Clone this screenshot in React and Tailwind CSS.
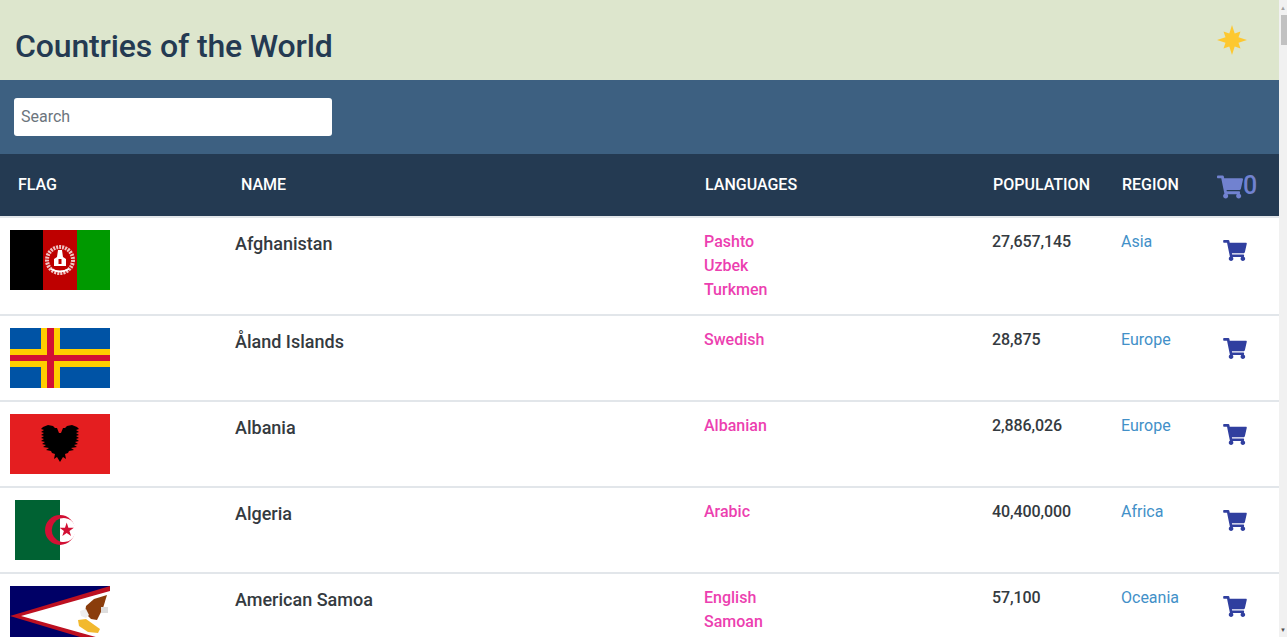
import React from 'react';

const cartPath =
  'M528.12 301.319l47.273-208C578.806 78.301 567.391 64 551.99 64H159.208l-9.166-44.81C147.758 8.021 137.93 0 126.529 0H24C10.745 0 0 10.745 0 24v16c0 13.255 10.745 24 24 24h69.883l70.248 343.435C147.325 417.1 136 435.222 136 456c0 30.928 25.072 56 56 56s56-25.072 56-56c0-15.674-6.447-29.835-16.824-40h209.647C430.447 426.165 424 440.326 424 456c0 30.928 25.072 56 56 56s56-25.072 56-56c0-22.172-12.888-41.332-31.579-50.405l5.517-24.276c3.413-15.018-8.002-29.319-23.403-29.319H218.117l-6.545-32h293.145c11.206 0 20.92-7.754 23.403-18.681z';

function Cart({ className }) {
  return (
    <svg viewBox="0 0 576 512" className={className} fill="currentColor">
      <path d={cartPath} />
    </svg>
  );
}

function Sun() {
  return (
    <svg viewBox="0 0 30 30" className="w-[30px] h-[30px]" fill="#fdc830">
      <path d="M15 0L17.700 8.500 23.500 6.500 21.500 12.300 30 15 21.500 17.700 23.500 23.500 17.700 21.500 15 30 12.300 21.500 6.500 23.500 8.500 17.700 0 15 8.500 12.300 6.500 6.500 12.300 8.500z" />
    </svg>
  );
}

function Afghanistan() {
  return (
    <svg viewBox="0 0 100 60" className="w-[100px] h-[60px]">
      <rect width="34" height="60" fill="#000" />
      <rect x="33" width="34" height="60" fill="#be0000" />
      <rect x="67" width="33" height="60" fill="#009900" />
      <circle cx="50" cy="30" r="13" fill="none" stroke="#f0c4c4" strokeWidth="4" strokeDasharray="2 1" />
      <path d="M44 36v-7l3-2 1-7h4l1 7 3 2v7z" fill="#fff" />
      <rect x="48.500" y="29" width="3" height="5" fill="#be0000" />
      <path d="M41 39q9 5 18 0" fill="none" stroke="#fff" strokeWidth="2" />
    </svg>
  );
}

function Aland() {
  return (
    <svg viewBox="0 0 100 60" className="w-[100px] h-[60px]">
      <rect width="100" height="60" fill="#0053a5" />
      <rect x="31" width="19" height="60" fill="#ffce00" />
      <rect y="21" width="100" height="18" fill="#ffce00" />
      <rect x="37" width="7" height="60" fill="#d21034" />
      <rect y="27" width="100" height="6" fill="#d21034" />
    </svg>
  );
}

function Albania() {
  const half =
    'M50 48L47 43 44 45 45 40 42 39 41 37 36 36 39 34 33 33 36 31 32 30 35 28 31 27 34 25 31 24 34 22 31 21 34 19 31 18 34 16 31 15 33 13 38 11 43 12 46 15 44 16 41 17 43 14 47 14 49 19 50 19z';
  return (
    <svg viewBox="0 0 100 60" className="w-[100px] h-[60px]">
      <rect width="100" height="60" fill="#e41e20" />
      <path d={half} fill="#000" />
      <path d={half} fill="#000" transform="matrix(-1 0 0 1 100 0)" />
    </svg>
  );
}

function Algeria() {
  return (
    <div className="pl-[5px]">
      <svg viewBox="0 0 90 60" className="w-[90px] h-[60px]">
        <rect width="45" height="60" fill="#006233" />
        <circle cx="45" cy="30" r="15" fill="#d21034" />
        <path d="M45 18.600A12 12 0 0 0 45 41.400z" fill="#006233" />
        <path d="M45 18.600A12 12 0 1 1 45 41.400z" fill="#fff" />
        <path d="M51.700 22.500L53.400 27.650 58.830 27.680 54.460 30.900 56.100 36.070 51.700 32.900 47.300 36.070 48.940 30.900 44.570 27.680 50 27.650z" fill="#d21034" />
      </svg>
    </div>
  );
}

function Samoa() {
  return (
    <svg viewBox="0 0 100 60" className="w-[100px] h-[60px]">
      <rect width="100" height="60" fill="#000066" />
      <path d="M100 0L0 30l100 30z" fill="#bd1021" />
      <path d="M100 5L11 30l89 25z" fill="#fff" />
      <path d="M97 9L84 13 76 20 75 27 81 33 87 34 93 22z" fill="#8a3d0c" />
      <path d="M91 21h7v6h-7z" fill="#dddddd" />
      <path d="M70 25l6-2 3 6-3 3-5-2z" fill="#eeeeee" />
      <path d="M68 34l8-1 14 10-2 4-10-1-9-6z" fill="#f2b92e" />
    </svg>
  );
}

const countries = [
  { name: 'Afghanistan', flag: <Afghanistan />, languages: ['Pashto', 'Uzbek', 'Turkmen'], population: '27,657,145', region: 'Asia', h: 'h-[98px]' },
  { name: 'Åland Islands', flag: <Aland />, languages: ['Swedish'], population: '28,875', region: 'Europe', h: 'h-[86px]' },
  { name: 'Albania', flag: <Albania />, languages: ['Albanian'], population: '2,886,026', region: 'Europe', h: 'h-[86px]' },
  { name: 'Algeria', flag: <Algeria />, languages: ['Arabic'], population: '40,400,000', region: 'Africa', h: 'h-[86px]' },
  { name: 'American Samoa', flag: <Samoa />, languages: ['English', 'Samoan'], population: '57,100', region: 'Oceania', h: 'h-[99px]' },
];

const gridCols = 'grid grid-cols-[225px_469px_288px_129px_102px_66px]';

function Row({ country }) {
  return (
    <div className={`${gridCols} ${country.h} pl-[10px] border-t-2 border-[#e2e6ea] bg-white`}>
      <div className="pt-[12px]">{country.flag}</div>
      <div className="pt-[12px] text-[18px] leading-[27px] font-medium text-[#343a40]">{country.name}</div>
      <div className="pt-[12px] text-[16px] leading-[24px] font-medium text-[#ec3fb0]">
        {country.languages.map((lang) => (
          <div key={lang}>{lang}</div>
        ))}
      </div>
      <div className="pt-[12px] text-[16px] leading-[24px] font-medium tracking-[-0.1px] text-[#343a40]">{country.population}</div>
      <div className="pt-[12px] text-[16px] leading-[24px] text-[#4290c8]">{country.region}</div>
      <div className="pt-[22px] text-[#303f9f]">
        <Cart className="w-[24px] h-[21px]" />
      </div>
    </div>
  );
}

export default function App() {
  return (
    <div className="flex h-[637px] overflow-hidden font-['Roboto',sans-serif]">
      <div className="w-[1279px] shrink-0 overflow-hidden">
        <header className="h-[80px] bg-[#dde6cd] flex justify-between pl-[15px] pr-[32px]">
          <h1 className="pt-[27px] text-[32px] leading-[38px] font-medium tracking-[-0.14px] text-[#243a52]">Countries of the World</h1>
          <div className="pt-[25px]">
            <Sun />
          </div>
        </header>

        <div className="h-[74px] bg-[#3d6081] pl-[14px] pt-[18px]">
          <input
            placeholder="Search"
            className="block w-[318px] h-[38px] rounded-[3px] bg-white px-[7px] pb-[2px] text-[16px] text-[#495057] placeholder:text-[#6c757d] outline-none"
          />
        </div>

        <div className={`${gridCols} h-[62px] items-center pl-[18px] bg-[#243a52] text-[16px] font-medium text-white`}>
          <div>FLAG</div>
          <div className="-ml-[2px]">NAME</div>
          <div className="-ml-[7px]">LANGUAGES</div>
          <div className="-ml-[7px]">POPULATION</div>
          <div className="-ml-[7px]">REGION</div>
          <div className="-ml-[14px] flex items-center text-[#7182d0] text-[25px] leading-none">
            <Cart className="w-[26px] h-[24px] mt-[3px]" />
            <span>0</span>
          </div>
        </div>

        {countries.map((c) => (
          <Row key={c.name} country={c} />
        ))}
      </div>

      <div className="w-[8px] shrink-0 bg-[#f1f1f1] flex flex-col justify-between relative">
        <div className="h-[15px] flex items-center justify-center text-[#a3a3a3] text-[6px] leading-none">▲</div>
        <div className="absolute top-[15px] left-[2px] right-0 h-[30px] bg-[#c1c1c1]" />
        <div className="h-[15px] flex items-center justify-center text-[#505050] text-[6px] leading-none">▼</div>
      </div>
    </div>
  );
}
